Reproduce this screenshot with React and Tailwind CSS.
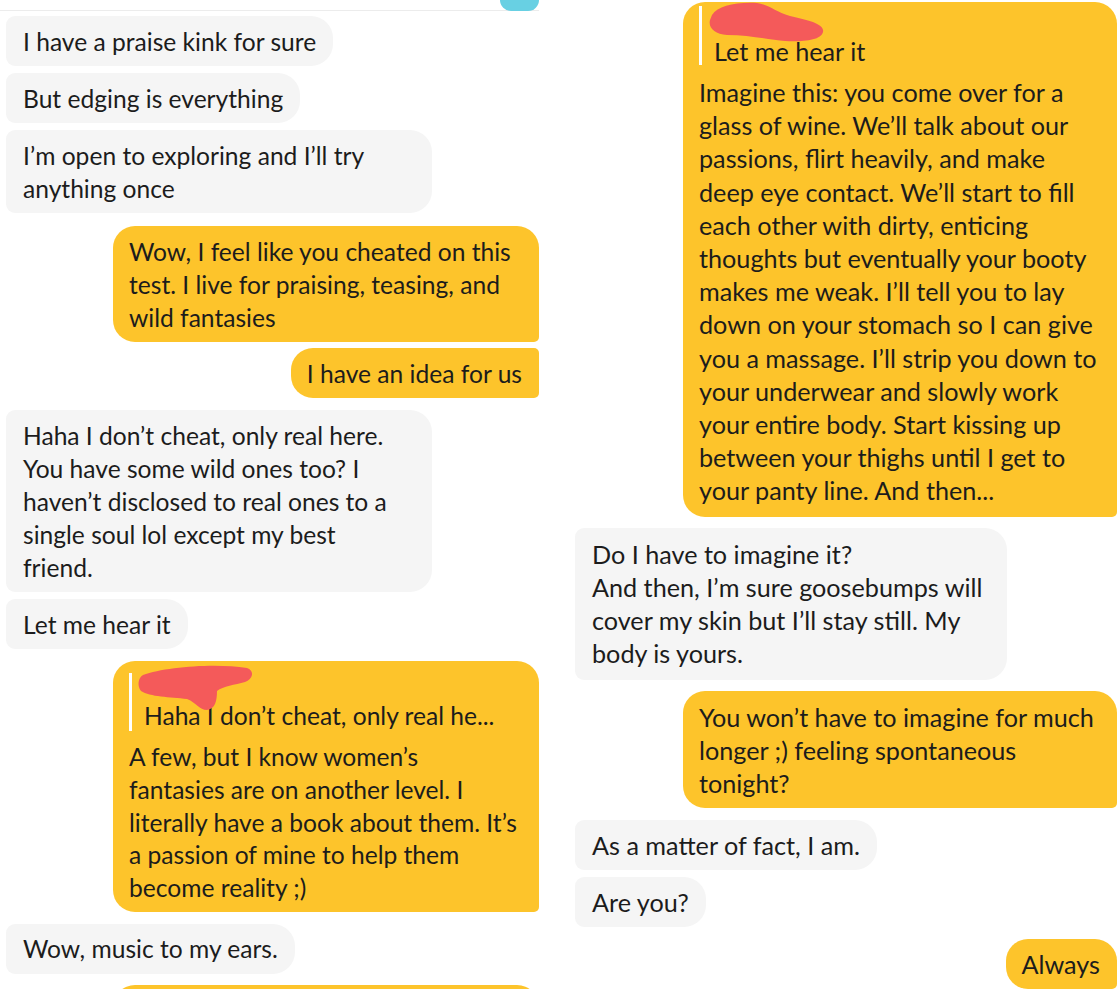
const font = { fontFamily: 'Lato, "Noto Sans", sans-serif' };

function Lines({ lines, lh = 'leading-[33px]' }) {
  return (
    <div className={`${lh} whitespace-nowrap`}>
      {lines.map((l, i) => (
        <div key={i}>{l}</div>
      ))}
    </div>
  );
}

function In({ lines, className = '' }) {
  return (
    <div
      className={`self-start bg-[#f5f5f5] text-[#1c1c1c] rounded-r-[22px] rounded-l-[9px] px-[17px] py-[8.5px] ${className}`}
    >
      <Lines lines={lines} />
    </div>
  );
}

function Out({ lines, className = '', first = true }) {
  return (
    <div
      className={`self-end bg-[#fdc42b] text-[#1c1c1c] rounded-l-[22px] rounded-br-[5px] ${
        first ? 'rounded-tr-[22px]' : 'rounded-tr-[5px]'
      } pl-[16px] pr-[17px] py-[8.5px] ${className}`}
    >
      <Lines lines={lines} />
    </div>
  );
}

// red marker blob hiding the quoted name
function Scribble({ className = '', d, w, h }) {
  return (
    <svg className={`absolute pointer-events-none ${className}`} width={w} height={h} viewBox={`0 0 ${w} ${h}`}>
      <path d={d} fill="#f45a5a" />
    </svg>
  );
}

export default function App() {
  return (
    <div className="flex items-start w-[1120px] h-[989px] overflow-hidden bg-white" style={font}>
      {/* left screenshot */}
      <div className="w-[539px] shrink-0 pl-[6px] flex flex-col text-[24.6px]">
        <div className="-ml-[6px] h-[11px] shrink-0 border-b border-[#ececec] relative">
          <div className="absolute right-0 top-0 w-[39px] h-[11px] bg-[#68d0e3] rounded-b-full" />
        </div>
        <In className="mt-[5px]" lines={['I have a praise kink for sure']} />
        <In className="mt-[7px]" lines={['But edging is everything']} />
        <In className="mt-[7px] w-[426px]" lines={['I’m open to exploring and I’ll try', 'anything once']} />
        <Out
          className="mt-[13px] w-[426px]"
          lines={['Wow, I feel like you cheated on this', 'test. I live for praising, teasing, and', 'wild fantasies']}
        />
        <Out className="mt-[6px]" first={false} lines={['I have an idea for us']} />
        <In
          className="mt-[12px] w-[426px]"
          lines={[
            'Haha I don’t cheat, only real here.',
            'You have some wild ones too? I',
            'haven’t disclosed to real ones to a',
            'single soul lol except my best',
            'friend.',
          ]}
        />
        <In className="mt-[7px]" lines={['Let me hear it']} />
        <div className="self-end mt-[12px] w-[426px] bg-[#fdc42b] text-[#1c1c1c] rounded-l-[22px] rounded-tr-[22px] rounded-br-[5px] pl-[16px] pr-[17px] pt-[12px] pb-[7px]">
          <div className="border-l-[3px] border-white pl-[12px]">
            <div className="h-[27px] relative">
              <Scribble
                className="-left-[19px] -top-[12px]"
                w={140}
                h={70}
                d="M18 14 C 40 6, 90 2, 122 7 C 130 10, 128 18, 120 21 C 110 24, 98 25, 92 30 C 92 40, 90 48, 82 49 C 74 49, 72 42, 62 38 C 45 36, 25 36, 16 30 C 12 25, 13 17, 18 14 Z"
              />
            </div>
            <div className="leading-[31px] whitespace-nowrap">Haha I don’t cheat, only real he...</div>
          </div>
          <div className="mt-[10px]">
            <Lines
              lh="leading-[32.8px]"
              lines={[
                'A few, but I know women’s',
                'fantasies are on another level. I',
                'literally have a book about them. It’s',
                'a passion of mine to help them',
                'become reality ;)',
              ]}
            />
          </div>
        </div>
        <In className="mt-[12px]" lines={['Wow, music to my ears.']} />
        <div className="self-end shrink-0 mt-[11px] w-[426px] h-[60px] bg-[#fdc42b] rounded-l-[22px] rounded-tr-[22px]" />
      </div>

      {/* right screenshot */}
      <div className="ml-[36px] w-[542px] shrink-0 flex flex-col text-[25.2px]">
        <div className="self-end mt-[2px] w-[434px] bg-[#fdc42b] text-[#1c1c1c] rounded-l-[22px] rounded-tr-[22px] rounded-br-[5px] pl-[16px] pr-[17px] pt-[4px] pb-[9px]">
          <div className="border-l-[3px] border-white pl-[12px]">
            <div className="h-[31px] relative">
              <Scribble
                className="-left-[24px] -top-[6px]"
                w={150}
                h={70}
                d="M22 15 C 28 6, 45 2, 67 3 C 80 5, 85 12, 100 16 C 118 20, 135 24, 133 32 C 131 41, 110 42, 95 41 C 80 40, 60 35, 37 35 C 25 34, 18 28, 20 20 Z"
              />
            </div>
            <div className="leading-[28px] whitespace-nowrap">Let me hear it</div>
          </div>
          <div className="mt-[11px]">
            <Lines
              lh="leading-[33.2px]"
              lines={[
                'Imagine this: you come over for a',
                'glass of wine. We’ll talk about our',
                'passions, flirt heavily, and make',
                'deep eye contact. We’ll start to fill',
                'each other with dirty, enticing',
                'thoughts but eventually your booty',
                'makes me weak. I’ll tell you to lay',
                'down on your stomach so I can give',
                'you a massage. I’ll strip you down to',
                'your underwear and slowly work',
                'your entire body. Start kissing up',
                'between your thighs until I get to',
                'your panty line. And then...',
              ]}
            />
          </div>
        </div>
        <div className="self-start mt-[11px] w-[432px] bg-[#f5f5f5] text-[#1c1c1c] rounded-r-[22px] rounded-l-[9px] px-[17px] pt-[10.5px] pb-[9.5px]">
          <Lines
            lines={[
              'Do I have to imagine it?',
              'And then, I’m sure goosebumps will',
              'cover my skin but I’ll stay still. My',
              'body is yours.',
            ]}
          />
        </div>
        <Out
          className="mt-[11px] w-[434px] !pt-[10px]"
          lines={['You won’t have to imagine for much', 'longer ;) feeling spontaneous', 'tonight?']}
        />
        <In className="mt-[12px]" lines={['As a matter of fact, I am.']} />
        <In className="mt-[7px]" lines={['Are you?']} />
        <Out className="mt-[12px]" lines={['Always']} />
      </div>
    </div>
  );
}
